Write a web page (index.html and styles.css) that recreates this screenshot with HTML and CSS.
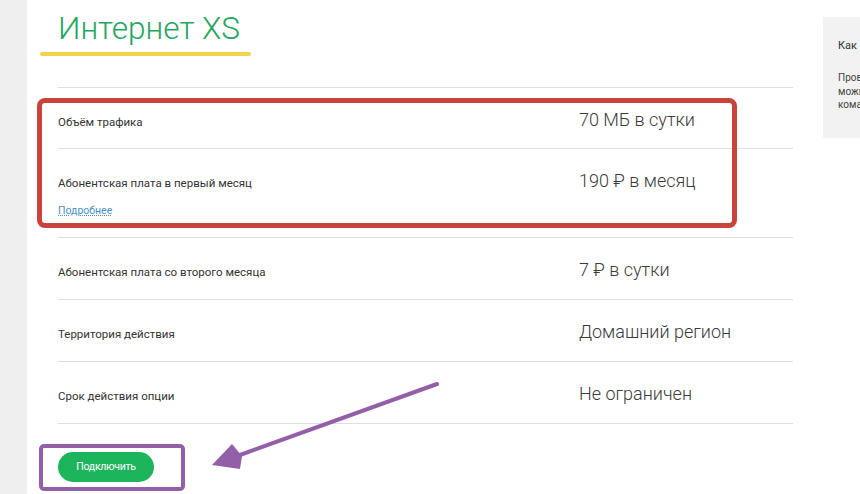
FILE: index.html
```html
<!DOCTYPE html>
<html>
	<head>
		<meta charset="utf-8" />
		<title>Интернет XS</title>
		<link rel="stylesheet" href="styles.css">
	</head>
	<body>
		<div class="page">
			<div class="side"></div>

			<div class="main">
				<h1 class="title">Интернет XS</h1>
				<div class="title-mark"></div>

				<div class="params">
					<div class="row">
						<div class="label">Объём трафика</div>
						<div class="value">70 МБ в сутки</div>
					</div>
					<div class="row">
						<div class="label">
							Абонентская плата в первый месяц
							<a href="javascript:;" class="more">Подробнее</a>
						</div>
						<div class="value">190 ₽ в месяц</div>
					</div>
					<div class="row">
						<div class="label">Абонентская плата со второго месяца</div>
						<div class="value">7 ₽ в сутки</div>
					</div>
					<div class="row">
						<div class="label">Территория действия</div>
						<div class="value">Домашний регион</div>
					</div>
					<div class="row">
						<div class="label">Срок действия опции</div>
						<div class="value">Не ограничен</div>
					</div>
				</div>

				<div class="actions">
					<a href="javascript:;" class="btn">Подключить</a>
				</div>

				<!-- пометки поверх скриншота -->
				<div class="mark-red"></div>
				<div class="mark-purple"></div>
				<svg class="mark-arrow" width="240" height="100" viewBox="0 0 240 100">
					<line x1="223" y1="14" x2="26" y2="85" stroke="#9360a8" stroke-width="4" stroke-linecap="round" />
					<polygon points="-2,95 18,74 28,86 26,99" fill="#9360a8" />
				</svg>
			</div>

			<div class="aside">
				<div class="aside-title">Как подключить?</div>
				<p class="aside-text">Проверить остаток трафика<br>можно в Личном кабинете<br>командой *558#</p>
			</div>
		</div>
	</body>
</html>
```

FILE: styles.css
```css
*{
	margin: 0;
	padding: 0;
	box-sizing: border-box;
}
body{
	background: #fff;
	font-family: Roboto, "Noto Sans", sans-serif;
	color: #333;
	overflow: hidden;
}
.page{
	display: flex;
	height: 494px;
}
.side{
	width: 27px;
	flex-shrink: 0;
	background: #efefef;
}
.main{
	position: relative;
	width: 783px;
	flex-shrink: 0;
	padding-left: 31px;
}
.title{
	font-size: 31.5px;
	font-weight: 300;
	line-height: 40px;
	color: #1fa760;
	padding-top: 9px;
}
.title-mark{
	width: 211px;
	height: 4px;
	margin: 3px 0 0 -18px;
	background: #f4d348;
	border-radius: 2px;
}
.params{
	width: 735px;
	margin-top: 31px;
	border-top: 1px solid #dfdfdf;
}
.row{
	display: flex;
	align-items: baseline;
	padding: 20px 0 15px;
	border-bottom: 1px solid #dfdfdf;
}
.row:first-child{
	padding-bottom: 14px;
}
.label{
	width: 521px;
	font-size: 11.5px;
	line-height: 24px;
	color: #333;
}
.value{
	font-size: 18px;
	font-weight: 300;
	line-height: 24px;
	color: #3a3a3a;
}
.more{
	display: block;
	margin: 8px 0 3px;
	font-size: 10.5px;
	line-height: 16px;
	color: #4a90c8;
	text-decoration: underline dotted;
}
.actions{
	padding-top: 28px;
}
.btn{
	display: inline-block;
	width: 96px;
	height: 30px;
	line-height: 30px;
	border-radius: 15px;
	background: #1db55b;
	color: #fff;
	font-size: 10.5px;
	text-align: center;
	text-decoration: none;
	letter-spacing: -0.3px;
}
.mark-red{
	position: absolute;
	left: 10px;
	top: 98px;
	width: 700px;
	height: 130px;
	border: 5px solid #c8433b;
	border-radius: 8px;
}
.mark-purple{
	position: absolute;
	left: 12px;
	top: 444px;
	width: 146px;
	height: 47px;
	border: 4px solid #9360a8;
	border-radius: 5px;
}
.mark-arrow{
	position: absolute;
	left: 187px;
	top: 370px;
	overflow: visible;
}
.aside{
	width: 200px;
	flex-shrink: 0;
	margin: 17px 0 0 13px;
	height: 121px;
	background: #f2f2f2;
	padding: 22px 15px;
}
.aside-title{
	font-size: 11px;
	line-height: 14px;
	color: #333;
}
.aside-text{
	margin-top: 18px;
	font-size: 10px;
	line-height: 13.5px;
	color: #444;
}
```
